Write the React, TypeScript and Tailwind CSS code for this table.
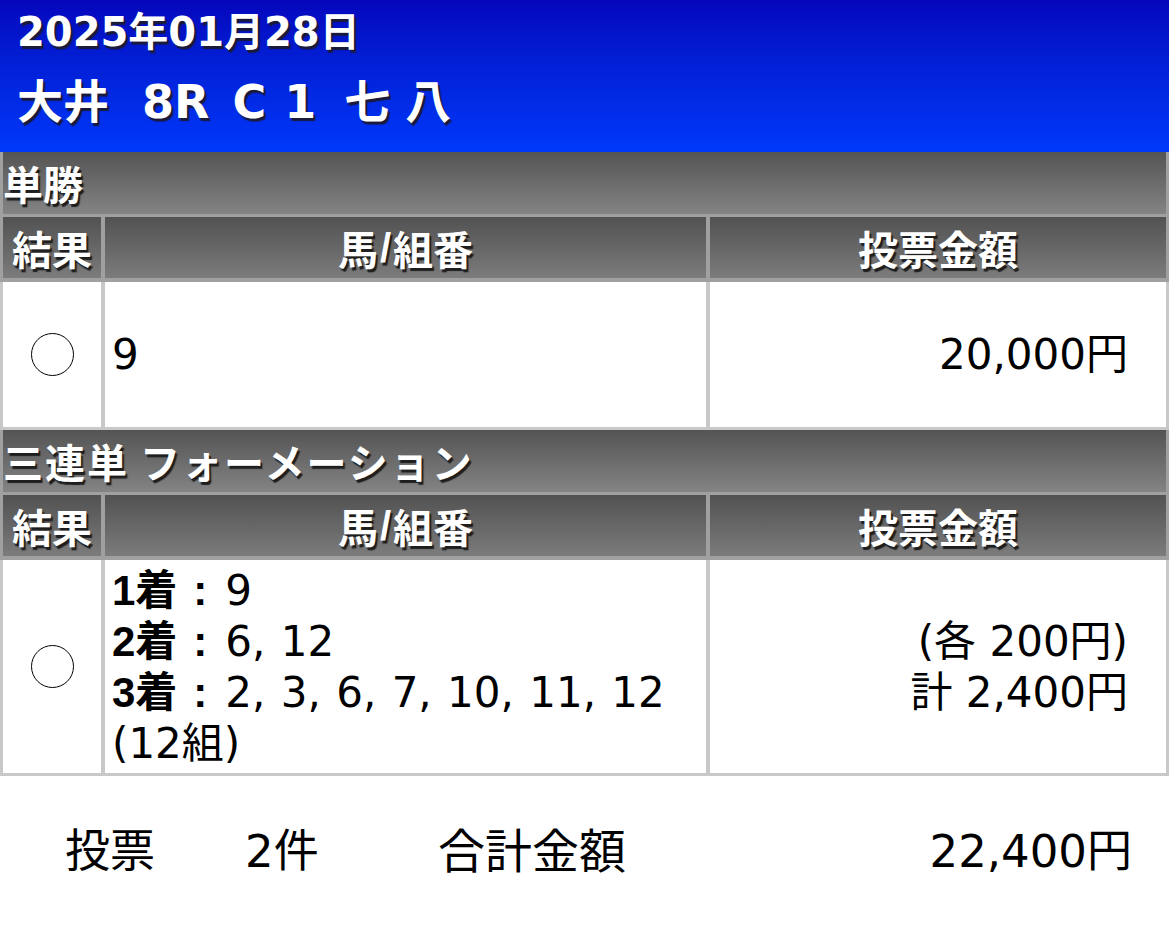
import React from "react"

const jp = { fontFamily: '"Noto Sans CJK JP", "Noto Sans", sans-serif' }
const num = { fontFamily: '"DejaVu Sans", "Noto Sans CJK JP", sans-serif' }
const latinBold = { fontFamily: '"Liberation Sans", "Noto Sans CJK JP", sans-serif' }

function SectionHeader({ title, wide }: { title: string; wide?: boolean }) {
  return (
    <div className="bg-[#a0a0a0] px-[3px]">
      <div
        className={`h-[62px] bg-linear-to-b from-[#545454] to-[#848484] flex items-center text-[40px] font-bold text-white leading-none [text-shadow:2px_3px_1px_#1e1e1e] ${wide ? "tracking-[2px]" : ""}`}
      >
        {title}
      </div>
    </div>
  )
}

function ColumnHeader() {
  return (
    <div className="bg-[#a0a0a0] p-[3px] pb-[4px] grid grid-cols-[98px_601px_456px] gap-x-[4px] text-[40px] font-bold text-white leading-none [text-shadow:2px_3px_1px_#1e1e1e]">
      <div className="h-[61px] bg-linear-to-b from-[#525252] to-[#7c7c7c] flex items-center justify-center">結果</div>
      <div className="h-[61px] bg-linear-to-b from-[#525252] to-[#7c7c7c] flex items-center justify-center">
        馬<span style={latinBold} className="mx-[2px]">/</span>組番
      </div>
      <div className="h-[61px] bg-linear-to-b from-[#525252] to-[#7c7c7c] flex items-center justify-center">投票金額</div>
    </div>
  )
}

function Circle() {
  return <div className="w-[43px] h-[43px] rounded-full border-[1.5px] border-black" />
}

function Place({ label, values }: { label: string; values: string }) {
  return (
    <div>
      <span className="font-bold" style={latinBold}>{label}</span>
      <span className="font-bold ml-[16px]" style={latinBold}>:</span>
      <span className="ml-[18px] [word-spacing:2px]">{values}</span>
    </div>
  )
}

export default function App() {
  return (
    <div className="w-[1169px] h-[925px] bg-white text-black" style={jp}>
      {/* header */}
      <div
        className="h-[152px] bg-linear-to-b from-[#0505bc] to-[#0038fb] px-[17px] pt-[9px] text-white font-bold [text-shadow:2px_3px_1px_#1a1a3a]"
        style={num}
      >
        <div className="text-[40px] leading-[46px]">2025年01月28日</div>
        <div className="mt-[22px] text-[46px] leading-[50px] flex items-center">
          <span>大井</span>
          <span className="ml-[33px]">8R</span>
          <span className="ml-[23px]">C</span>
          <span className="ml-[18px]">1</span>
          <span className="ml-[28px]">七</span>
          <span className="ml-[15px]">八</span>
        </div>
      </div>

      {/* 単勝 */}
      <SectionHeader title="単勝" />
      <ColumnHeader />
      <div className="bg-[#c8c8c8] px-[3px] pb-[3px] grid grid-cols-[98px_601px_456px] gap-x-[4px] text-[42px] leading-none" style={num}>
        <div className="h-[145px] bg-white flex items-center justify-center">
          <Circle />
        </div>
        <div className="h-[145px] bg-white flex items-center pl-[7px]">9</div>
        <div className="h-[145px] bg-white flex items-center justify-end pr-[38px]">20,000円</div>
      </div>

      {/* 三連単 */}
      <SectionHeader title="三連単 フォーメーション" wide />
      <ColumnHeader />
      <div className="bg-[#c8c8c8] px-[3px] pb-[3px] grid grid-cols-[98px_601px_456px] gap-x-[4px] text-[42px]" style={num}>
        <div className="h-[213px] bg-white flex items-center justify-center">
          <Circle />
        </div>
        <div className="h-[213px] bg-white flex flex-col justify-center pl-[7px] leading-[51px]">
          <Place label="1着" values="9" />
          <Place label="2着" values="6, 12" />
          <Place label="3着" values="2, 3, 6, 7, 10, 11, 12" />
          <div>(12組)</div>
        </div>
        <div className="h-[213px] bg-white flex flex-col justify-center items-end pr-[38px] leading-[51px]">
          <div>(各 200円)</div>
          <div>計 2,400円</div>
        </div>
      </div>

      {/* total */}
      <div className="h-[150px] flex items-center text-[45px] leading-none pl-[65px] pr-[37px]" style={num}>
        <span className="w-[180px]">投票</span>
        <span className="w-[193px]">2件</span>
        <span className="text-[47px]">合計金額</span>
        <span className="ml-auto">22,400円</span>
      </div>
    </div>
  )
}
